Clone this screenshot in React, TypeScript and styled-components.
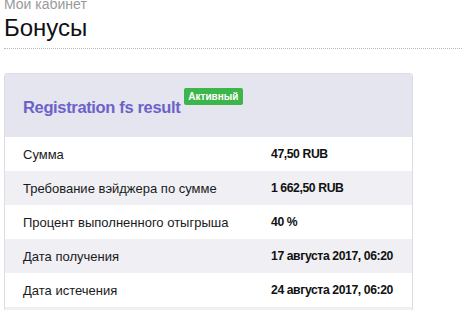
import React from "react";
import styled, { createGlobalStyle } from "styled-components";

const Global = createGlobalStyle`
  html, body { margin: 0; padding: 0; background: #fff; }
  body { font-family: "Liberation Sans", Arial, sans-serif; color: #1a1a1a; }
`;

const Page = styled.div`
  padding: 0 0 0 4px;
  margin-top: -4px;
`;

const Crumb = styled.div`
  font-size: 14px;
  line-height: 17px;
  color: #9a9a9a;
`;

const Title = styled.h1`
  margin: 0;
  font-size: 24px;
  font-weight: normal;
  line-height: 30px;
  color: #111;
`;

const Divider = styled.div`
  margin-top: 5px;
  border-top: 1px dotted #b8b8cc;
`;

const Card = styled.div`
  margin-top: 24px;
  width: 407px;
  border: 1px solid #dcdce8;
  border-radius: 3px 3px 0 0;
  overflow: hidden;
`;

const Header = styled.div`
  background: #e5e5ef;
  height: 63px;
  padding: 14px 0 0 18px;
  box-sizing: border-box;
  display: flex;
  align-items: flex-start;
`;

const CardTitle = styled.div`
  font-size: 16.5px;
  font-weight: bold;
  letter-spacing: -0.35px;
  color: #6c62c9;
  margin-top: 10px;
`;

const Badge = styled.span`
  margin-left: 4px;
  background: #3cb54a;
  color: #fff;
  font-size: 10px;
  font-weight: bold;
  line-height: 17px;
  padding: 0 4px;
  border-radius: 2px;
`;

const Row = styled.div<{ $alt?: boolean }>`
  display: grid;
  grid-template-columns: 248px 1fr;
  height: 34px;
  align-items: center;
  padding-left: 18px;
  background: ${(p) => (p.$alt ? "#efeff4" : "#fff")};
  font-size: 13px;
`;

const Label = styled.div`
  color: #1a1a1a;
`;

const Value = styled.div`
  font-size: 12.2px;
  font-weight: bold;
  letter-spacing: -0.4px;
  white-space: nowrap;
  color: #111;
`;

const rows = [
  ["Сумма", "47,50 RUB"],
  ["Требование вэйджера по сумме", "1 662,50 RUB"],
  ["Процент выполненного отыгрыша", "40 %"],
  ["Дата получения", "17 августа 2017, 06:20"],
  ["Дата истечения", "24 августа 2017, 06:20"],
  ["", ""],
];

export default function App() {
  return (
    <>
      <Global />
      <Page>
        <Crumb>Мой кабинет</Crumb>
        <Title>Бонусы</Title>
        <Divider />
        <Card>
          <Header>
            <CardTitle>Registration fs result</CardTitle>
            <Badge>Активный</Badge>
          </Header>
          {rows.map(([l, v], i) => (
            <Row key={i} $alt={i % 2 === 1}>
              <Label>{l}</Label>
              <Value>{v}</Value>
            </Row>
          ))}
        </Card>
      </Page>
    </>
  );
}
